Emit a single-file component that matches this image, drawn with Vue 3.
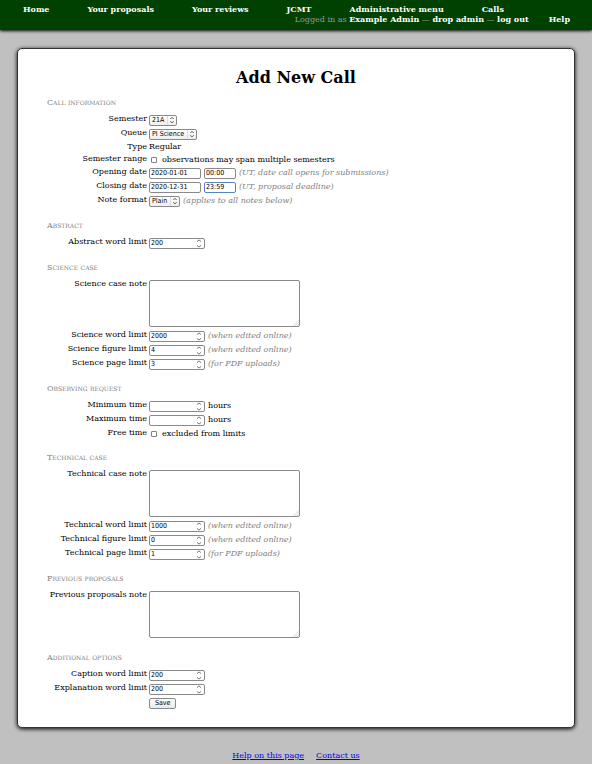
<script setup>
import { reactive } from 'vue'

const nav = ['Home', 'Your proposals', 'Your reviews', 'JCMT', 'Administrative menu', 'Calls']

const sections = reactive([
  {
    title: 'Call information',
    rows: [
      { id: 'semester', label: 'Semester', type: 'select', value: '21A' },
      { id: 'queue', label: 'Queue', type: 'select', value: 'PI Science' },
      { id: 'type', label: 'Type', type: 'static', value: 'Regular' },
      { id: 'range', label: 'Semester range', type: 'checkbox', value: false, text: 'observations may span multiple semesters' },
      { id: 'open', label: 'Opening date', type: 'datetime', value: '2020-01-01', time: '00:00', hint: '(UT, date call opens for submissions)' },
      { id: 'close', label: 'Closing date', type: 'datetime', value: '2020-12-31', time: '23:59', active: true, hint: '(UT, proposal deadline)' },
      { id: 'format', label: 'Note format', type: 'select', value: 'Plain', hint: '(applies to all notes below)' },
    ],
  },
  {
    title: 'Abstract',
    rows: [{ id: 'abst-word', label: 'Abstract word limit', type: 'number', value: 200 }],
  },
  {
    title: 'Science case',
    rows: [
      { id: 'sci-note', label: 'Science case note', type: 'textarea', value: '' },
      { id: 'sci-word', label: 'Science word limit', type: 'number', value: 2000, hint: '(when edited online)' },
      { id: 'sci-fig', label: 'Science figure limit', type: 'number', value: 4, hint: '(when edited online)' },
      { id: 'sci-page', label: 'Science page limit', type: 'number', value: 3, hint: '(for PDF uploads)' },
    ],
  },
  {
    title: 'Observing request',
    rows: [
      { id: 'time-min', label: 'Minimum time', type: 'number', value: '', text: 'hours' },
      { id: 'time-max', label: 'Maximum time', type: 'number', value: '', text: 'hours' },
      { id: 'free', label: 'Free time', type: 'checkbox', value: false, text: 'excluded from limits' },
    ],
  },
  {
    title: 'Technical case',
    rows: [
      { id: 'tech-note', label: 'Technical case note', type: 'textarea', value: '' },
      { id: 'tech-word', label: 'Technical word limit', type: 'number', value: 1000, hint: '(when edited online)' },
      { id: 'tech-fig', label: 'Technical figure limit', type: 'number', value: 0, hint: '(when edited online)' },
      { id: 'tech-page', label: 'Technical page limit', type: 'number', value: 1, hint: '(for PDF uploads)' },
    ],
  },
  {
    title: 'Previous proposals',
    rows: [{ id: 'prev-note', label: 'Previous proposals note', type: 'textarea', value: '' }],
  },
  {
    title: 'Additional options',
    rows: [
      { id: 'capt-word', label: 'Caption word limit', type: 'number', value: 200 },
      { id: 'expl-word', label: 'Explanation word limit', type: 'number', value: 200 },
      { id: 'save', type: 'submit' },
    ],
  },
])
</script>

<template>
  <div class="page">
    <header class="top">
      <nav class="menu">
        <a v-for="item in nav" :key="item" href="#">{{ item }}</a>
      </nav>
      <div class="account">
        <span>Logged in as <a href="#">Example Admin</a> — <a href="#">drop admin</a> — <a href="#">log out</a></span>
        <a href="#">Help</a>
      </div>
    </header>

    <main class="card">
      <h1>Add New Call</h1>
      <form @submit.prevent>
        <section v-for="section in sections" :key="section.title">
          <h2>{{ section.title }}</h2>
          <div v-for="row in section.rows" :key="row.id" class="row" :class="'row-' + row.type">
            <label v-if="row.label && row.type !== 'static'" class="name" :for="row.id">{{ row.label }}</label>
            <span v-else class="name">{{ row.label }}</span>
            <div class="value">
              <span v-if="row.type === 'select'" class="select">
                <select :id="row.id" v-model="row.value">
                  <option>{{ row.value }}</option>
                </select>
                <svg viewBox="0 0 6 8" aria-hidden="true"><path d="M1.4 3 3 1.3 4.6 3M1.4 5.2 3 6.9 4.6 5.2" /></svg>
              </span>
              <span v-else-if="row.type === 'static'">{{ row.value }}</span>
              <input v-else-if="row.type === 'checkbox'" :id="row.id" v-model="row.value" type="checkbox">
              <template v-else-if="row.type === 'datetime'">
                <input :id="row.id" v-model="row.value" class="box date" type="text">
                <input v-model="row.time" class="box time" :class="{ active: row.active }" type="text" :aria-label="row.label + ' time'">
              </template>
              <span v-else-if="row.type === 'number'" class="box number">
                <input :id="row.id" v-model="row.value" type="number">
                <svg viewBox="0 0 6 9" aria-hidden="true"><path d="M1 2.6 3 .9 5 2.6M1 6.4 3 8.1 5 6.4" /></svg>
              </span>
              <span v-else-if="row.type === 'textarea'" class="area">
                <textarea :id="row.id" v-model="row.value"></textarea>
                <svg class="grip" viewBox="0 0 6 6" aria-hidden="true"><path d="M0 6 6 0M2 6 6 2M4 6 6 4" /></svg>
              </span>
              <button v-else type="submit">Save</button>
              <span v-if="row.text">{{ row.text }}</span>
              <em v-if="row.hint">{{ row.hint }}</em>
            </div>
          </div>
        </section>
      </form>
    </main>

    <footer>
      <a href="#">Help on this page</a>
      <a href="#">Contact us</a>
    </footer>
  </div>
</template>

<style>
body {
  background: #c0c0c0;
}
</style>

<style scoped>
.page {
  font: 8px/12px "DejaVu Serif", serif;
  color: #000;
}

.top {
  padding: 4px 22px 5px 23px;
  line-height: 10px;
  background: #004000;
  box-shadow: 0 1px 3px #000;
}

.top a {
  color: #fff;
  font-weight: bold;
  text-decoration: none;
}

.menu {
  display: flex;
  gap: 38px;
}

.account {
  display: flex;
  justify-content: flex-end;
  gap: 20px;
  color: #999;
}

.card {
  margin: 18px 17px 0;
  padding: 19px 29px 5px;
  background: #fff;
  border: 1px solid #333;
  border-radius: 5px;
  box-shadow: 0 1px 4px #000;
}

h1 {
  margin: 0 0 9px;
  font-size: 16px;
  line-height: 20px;
  text-align: center;
}

h2 {
  margin: 0 0 4px;
  font-size: 8px;
  line-height: 12px;
  font-weight: normal;
  font-variant: small-caps;
  color: #808080;
}

section {
  margin-bottom: 12px;
}

.row {
  display: grid;
  grid-template-columns: 100px 1fr;
  column-gap: 2px;
  min-height: 14px;
}

.row-static {
  min-height: 12px;
}

.row-checkbox {
  min-height: 13px;
}

.name {
  text-align: right;
  white-space: nowrap;
}

.value {
  display: flex;
  align-items: center;
  gap: 3px;
}

em {
  color: #808080;
}

input,
select,
textarea,
button {
  box-sizing: border-box;
  margin: 0;
  font: 7px/9px "DejaVu Sans Condensed", "DejaVu Sans", sans-serif;
  color: #000;
  outline: none;
}

.box,
.select,
textarea,
button {
  box-sizing: border-box;
  border: 1px solid #8a8a8a;
  border-radius: 2px;
  background: #fff;
}

.box {
  height: 11px;
  padding: 0 1px;
}

.date {
  width: 52px;
}

.time {
  width: 32px;
}

.time.active {
  border-color: #5585c5;
}

.number {
  display: flex;
  align-items: center;
  width: 56px;
}

.number input {
  flex: 1;
  min-width: 0;
  height: 9px;
  padding: 0;
  border: 0;
  background: none;
  appearance: textfield;
}

.number input::-webkit-inner-spin-button {
  appearance: none;
}

svg {
  fill: none;
  stroke: #777;
  stroke-width: 1;
}

.number svg {
  width: 6px;
  height: 9px;
  margin-right: 1px;
}

.select {
  display: flex;
  align-items: center;
  height: 11px;
  padding: 0 1px 0 2px;
  background: linear-gradient(#fff, #eee);
}

.select select {
  height: 9px;
  padding: 0 2px 0 0;
  border: 0;
  border-right: 1px solid #ddd;
  background: none;
  appearance: none;
}

.select svg {
  width: 6px;
  height: 8px;
  margin-left: 1px;
  stroke: #555;
}

input[type="checkbox"] {
  width: 6px;
  height: 6px;
  margin: 0 2px;
  border: 1px solid #808080;
  border-radius: 1px;
  appearance: none;
}

input[type="checkbox"]:checked {
  background: #555;
}

.row-textarea .value {
  padding: 2px 0;
}

.area {
  position: relative;
  display: flex;
}

textarea {
  width: 151px;
  height: 47px;
  resize: none;
}

.grip {
  position: absolute;
  right: 1px;
  bottom: 1px;
  width: 6px;
  height: 6px;
  stroke: #ddd;
}

button {
  height: 11px;
  padding: 0 5px;
  background: linear-gradient(#fff, #e8e8e8);
}

footer {
  display: flex;
  justify-content: center;
  gap: 12px;
  padding-top: 22px;
  line-height: 12px;
}

footer a {
  color: #0000ee;
}
</style>
